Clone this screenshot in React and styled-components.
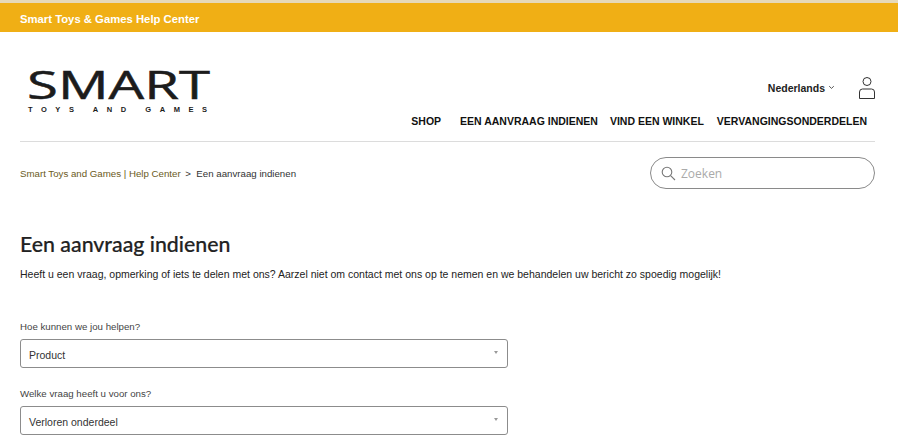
import React from 'react';
import styled, { createGlobalStyle } from 'styled-components';

const GlobalStyle = createGlobalStyle`
  html, body { margin: 0; padding: 0; background: #fff; overflow: hidden; }
  body { font-family: "Liberation Sans", Arial, sans-serif; color: #222; }
  * { box-sizing: border-box; }
`;

const Banner = styled.div`
  height: 32px;
  background: #f0af15;
  border-top: 3px solid #e6d9b8;
  padding: 3px 0 0 20px;
  display: flex;
  align-items: center;
  color: #fff;
  font-size: 11.3px;
  font-weight: bold;
`;

const Page = styled.div`
  padding: 0 23px 0 20px;
`;

const Header = styled.header`
  height: 110px;
  border-bottom: 1px solid #dcdcdc;
  display: flex;
  justify-content: space-between;
`;

const Logo = styled.svg`
  display: block;
  margin: 24px 0 0 7px;
`;

const LogoWord = styled.text`
  font-family: "Open Sans", sans-serif;
  font-size: 39px;
  fill: #1c1c1c;
  stroke: #1c1c1c;
  stroke-width: 0.5px;
`;

const LogoSub = styled.text`
  font-family: "Liberation Sans", sans-serif;
  font-size: 7.5px;
  font-weight: bold;
  fill: #1c1c1c;
`;

const HeaderRight = styled.div`
  display: flex;
  flex-direction: column;
  align-items: flex-end;
`;

const TopRow = styled.div`
  margin-top: 43px;
  height: 25px;
  display: flex;
  align-items: center;
`;

const Language = styled.div`
  font-size: 10.5px;
  font-weight: bold;
  display: flex;
  align-items: center;
  gap: 3px;
  margin-right: 23px;
  color: #222;
`;

const UserWrap = styled.div`
  margin-right: -1px;
  display: flex;
`;

const Nav = styled.nav`
  margin-top: 15px;
  padding-right: 8px;
  display: flex;
  font-size: 10.5px;
  font-weight: bold;
  color: #111;
`;

const NavItem = styled.a`
  margin-left: ${(p) => p.$gap}px;
  white-space: nowrap;
`;

const Crumbs = styled.div`
  height: 62px;
  display: flex;
  align-items: center;
  justify-content: space-between;
  font-size: 9.7px;
`;

const CrumbLink = styled.a`
  color: #6b5a22;
`;

const CrumbCurrent = styled.span`
  color: #333;
  margin-left: 2px;
`;

const Search = styled.div`
  width: 225px;
  height: 32px;
  border: 1px solid #8a8a8a;
  border-radius: 16px;
  display: flex;
  align-items: center;
  gap: 5px;
  padding-left: 10px;
  color: #aaa;
  font-family: "Open Sans", sans-serif;
  font-size: 12px;
`;

const Title = styled.h1`
  margin: 27px 0 0;
  font-family: Lato, sans-serif;
  font-size: 21.3px;
  font-weight: 500;
  -webkit-text-stroke: 0.2px #222;
  line-height: 26px;
  color: #222;
`;

const Intro = styled.p`
  margin: 10px 0 0;
  font-size: 10.5px;
  line-height: 14px;
  color: #222;
`;

const Form = styled.div`
  margin-top: 40px;
  width: 488px;
  display: flex;
  flex-direction: column;
  gap: 20px;
`;

const Field = styled.div`
  display: flex;
  flex-direction: column;
`;

const Label = styled.label`
  font-size: 9.7px;
  line-height: 12px;
  margin-bottom: 6px;
  color: #444;
`;

const SelectBox = styled.div`
  height: 29px;
  border: 1px solid #8c8c8c;
  border-radius: 3px;
  display: flex;
  align-items: center;
  justify-content: space-between;
  padding: 2px 9px 0 8px;
  font-size: 10.5px;
  color: #333;
`;

const Caret = styled.span`
  width: 0;
  height: 0;
  margin-bottom: 4px;
  border-left: 2.5px solid transparent;
  border-right: 2.5px solid transparent;
  border-top: 3px solid #999;
`;

const ChevronIcon = () => (
  <svg width="7" height="5" viewBox="0 0 7 5" fill="none" stroke="#444" strokeWidth="0.9">
    <path d="M1.2 1.2 L3.5 3.4 L5.8 1.2" />
  </svg>
);

const UserIcon = () => (
  <svg width="18" height="24" viewBox="0 0 18 24" fill="none" stroke="#333" strokeWidth="1">
    <circle cx="9" cy="5.5" r="4" />
    <path d="M1.5 22.5 V16 a3 3 0 0 1 3 -3 H13.5 a3 3 0 0 1 3 3 V22.5 Z" />
  </svg>
);

const SearchIcon = () => (
  <svg width="15" height="15" viewBox="0 0 15 15" fill="none" stroke="#777" strokeWidth="1.1">
    <circle cx="6" cy="6" r="4.8" />
    <path d="M9.6 9.6 L14 14" />
  </svg>
);

const SelectField = ({ label, value }) => (
  <Field>
    <Label>{label}</Label>
    <SelectBox>
      {value}
      <Caret />
    </SelectBox>
  </Field>
);

const App = () => (
  <>
    <GlobalStyle />
    <Banner>Smart Toys &amp; Games Help Center</Banner>
    <Page>
      <Header>
        <Logo width="184" height="58" viewBox="0 0 184 58">
          <LogoWord x="0" y="43" textLength="183" lengthAdjust="spacingAndGlyphs">SMART</LogoWord>
          <LogoSub x="1" y="56" textLength="179" lengthAdjust="spacing">TOYS AND GAMES</LogoSub>
        </Logo>
        <HeaderRight>
          <TopRow>
            <Language>
              Nederlands <ChevronIcon />
            </Language>
            <UserWrap>
              <UserIcon />
            </UserWrap>
          </TopRow>
          <Nav>
            <NavItem $gap={0}>SHOP</NavItem>
            <NavItem $gap={19}>EEN AANVRAAG INDIENEN</NavItem>
            <NavItem $gap={12}>VIND EEN WINKEL</NavItem>
            <NavItem $gap={13}>VERVANGINGSONDERDELEN</NavItem>
          </Nav>
        </HeaderRight>
      </Header>
      <Crumbs>
        <div>
          <CrumbLink>Smart Toys and Games | Help Center</CrumbLink>
          <CrumbCurrent> &gt;&nbsp; Een aanvraag indienen</CrumbCurrent>
        </div>
        <Search>
          <SearchIcon />
          Zoeken
        </Search>
      </Crumbs>
      <Title>Een aanvraag indienen</Title>
      <Intro>
        Heeft u een vraag, opmerking of iets te delen met ons? Aarzel niet om contact met ons op te nemen en we behandelen uw bericht zo spoedig mogelijk!
      </Intro>
      <Form>
        <SelectField label="Hoe kunnen we jou helpen?" value="Product" />
        <SelectField label="Welke vraag heeft u voor ons?" value="Verloren onderdeel" />
      </Form>
    </Page>
  </>
);

export default App;
